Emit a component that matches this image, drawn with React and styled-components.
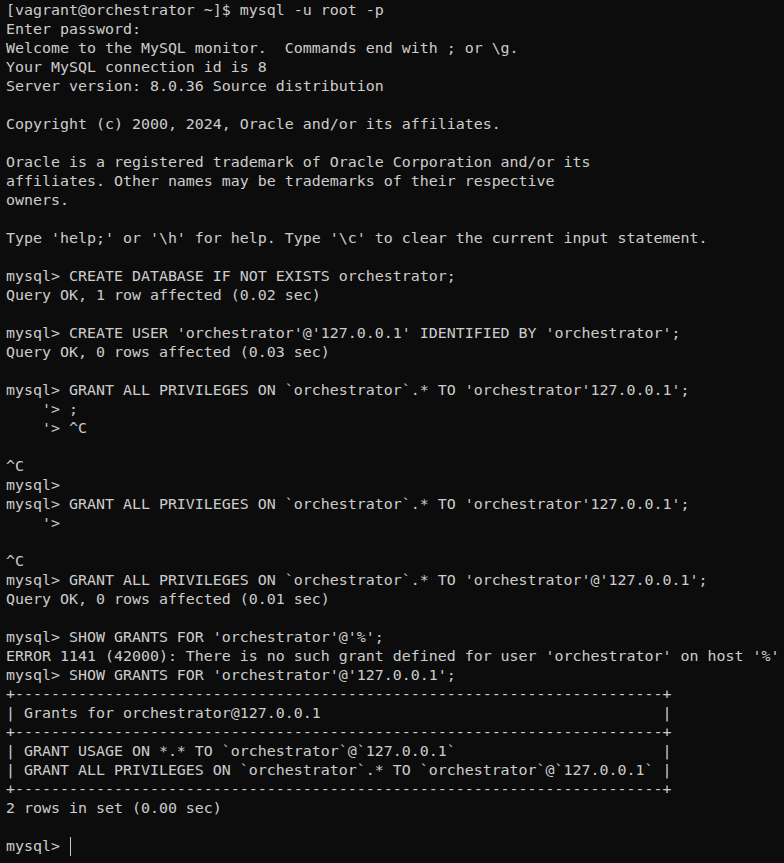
import { createGlobalStyle } from "styled-components";
import styled from "styled-components";

const GlobalStyle = createGlobalStyle`
	html, body {
		margin: 0;
		padding: 0;
		background-color: #0c0c0c;
	}
`;

const Terminal = styled.div`
	width: 784px;
	height: 863px;
	box-sizing: border-box;
	padding: 1px 0 0 6px;
	background-color: #0c0c0c;
	color: #cccccc;
	font-family: "DejaVu Sans Mono", "Liberation Mono", monospace;
	font-size: 14.95px;
	line-height: 19px;
	overflow: hidden;
`;

const Line = styled.div`
	white-space: pre;
	height: 19px;
`;

const Cursor = styled.span`
	display: inline-block;
	width: 1px;
	height: 19px;
	vertical-align: top;
	background-color: #cccccc;
	margin-left: 1px;
`;

const lines = [
	"[vagrant@orchestrator ~]$ mysql -u root -p",
	"Enter password:",
	"Welcome to the MySQL monitor.  Commands end with ; or \\g.",
	"Your MySQL connection id is 8",
	"Server version: 8.0.36 Source distribution",
	"",
	"Copyright (c) 2000, 2024, Oracle and/or its affiliates.",
	"",
	"Oracle is a registered trademark of Oracle Corporation and/or its",
	"affiliates. Other names may be trademarks of their respective",
	"owners.",
	"",
	"Type 'help;' or '\\h' for help. Type '\\c' to clear the current input statement.",
	"",
	"mysql> CREATE DATABASE IF NOT EXISTS orchestrator;",
	"Query OK, 1 row affected (0.02 sec)",
	"",
	"mysql> CREATE USER 'orchestrator'@'127.0.0.1' IDENTIFIED BY 'orchestrator';",
	"Query OK, 0 rows affected (0.03 sec)",
	"",
	"mysql> GRANT ALL PRIVILEGES ON `orchestrator`.* TO 'orchestrator'127.0.0.1';",
	"    '> ;",
	"    '> ^C",
	"",
	"^C",
	"mysql>",
	"mysql> GRANT ALL PRIVILEGES ON `orchestrator`.* TO 'orchestrator'127.0.0.1';",
	"    '>",
	"",
	"^C",
	"mysql> GRANT ALL PRIVILEGES ON `orchestrator`.* TO 'orchestrator'@'127.0.0.1';",
	"Query OK, 0 rows affected (0.01 sec)",
	"",
	"mysql> SHOW GRANTS FOR 'orchestrator'@'%';",
	"ERROR 1141 (42000): There is no such grant defined for user 'orchestrator' on host '%'",
	"mysql> SHOW GRANTS FOR 'orchestrator'@'127.0.0.1';",
];

const rows = [
	"GRANT USAGE ON *.* TO `orchestrator`@`127.0.0.1`",
	"GRANT ALL PRIVILEGES ON `orchestrator`.* TO `orchestrator`@`127.0.0.1`",
];
const header = "Grants for orchestrator@127.0.0.1";
const colWidth = Math.max(header.length, ...rows.map((r) => r.length));
const border = "+" + "-".repeat(colWidth + 2) + "+";
const cell = (s) => "| " + s.padEnd(colWidth) + " |";

const table = [border, cell(header), border, ...rows.map(cell), border];

export default function App() {
	const output = [...lines, ...table, "2 rows in set (0.00 sec)", ""];

	return (
		<>
			<GlobalStyle />
			<Terminal>
				{output.map((text, i) => (
					<Line key={i}>{text}</Line>
				))}
				<Line>
					{"mysql> "}
					<Cursor />
				</Line>
			</Terminal>
		</>
	);
}
